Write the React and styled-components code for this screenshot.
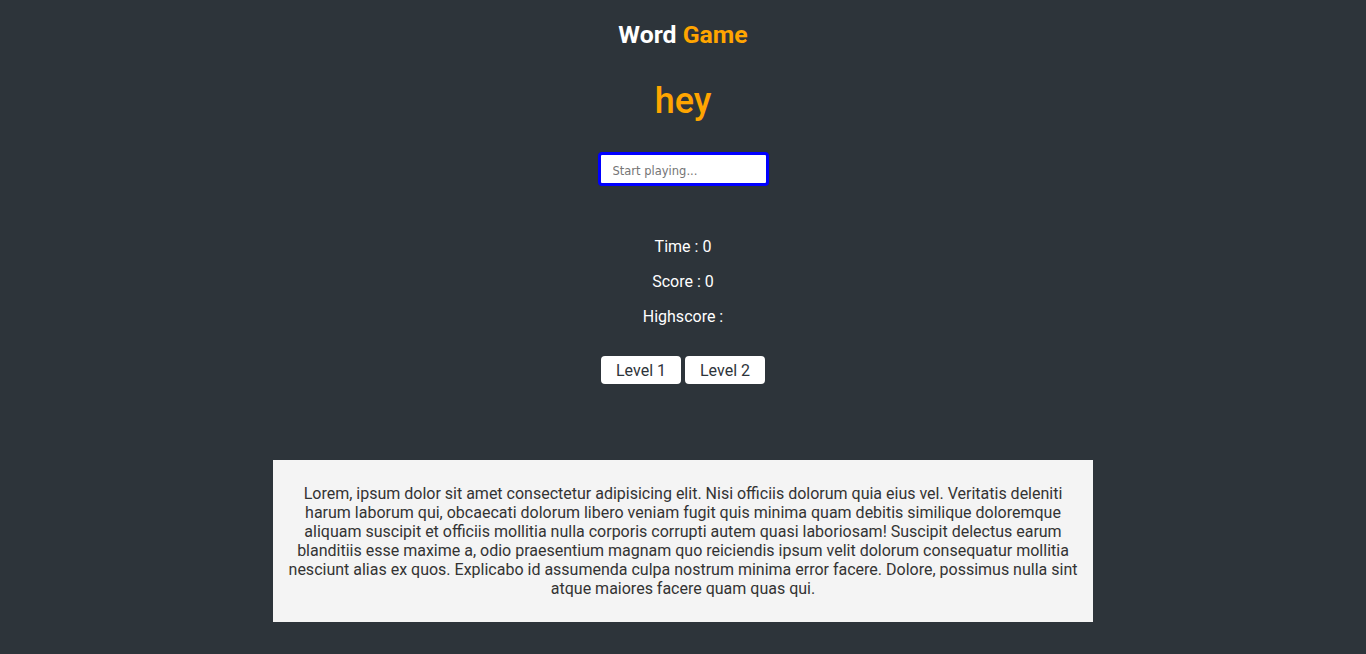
import React, { useState } from 'react'
import styled, { createGlobalStyle } from 'styled-components'

const GlobalStyle = createGlobalStyle`
  html, body {
    margin: 0;
    padding: 0;
    background: #2d343a;
    font-family: Roboto, "Liberation Sans", sans-serif;
  }
`

const Page = styled.main`
  min-height: 654px;
  display: flex;
  flex-direction: column;
  align-items: center;
  color: #fff;
`

const Title = styled.h1`
  margin: 21px 0 0;
  font-size: 24.8px;
  line-height: 28px;
  font-weight: 700;

  span {
    color: #ffa500;
  }
`

const Word = styled.h2`
  margin: 31px 0 0;
  font-size: 36px;
  line-height: 42px;
  font-weight: 500;
  color: #ffa500;
`

const Input = styled.input`
  margin-top: 30px;
  width: 171px;
  height: 34px;
  box-sizing: border-box;
  border: 3px solid #0000ff;
  border-radius: 4px;
  padding: 3px 12px 0;
  font-family: "DejaVu Sans", sans-serif;
  font-size: 11.5px;
  outline: none;

  &::placeholder {
    color: #757575;
  }
`

const Stats = styled.div`
  margin-top: 51px;
  display: flex;
  flex-direction: column;
  align-items: center;
  gap: 16px;
`

const Stat = styled.p`
  margin: 0;
  font-size: 16px;
  line-height: 19px;
`

const Levels = styled.div`
  margin-top: 30px;
  display: flex;
  gap: 4px;
`

const LevelButton = styled.button`
  width: 80px;
  height: 28px;
  border: none;
  border-radius: 4px;
  background: #fff;
  color: #2d343a;
  font-family: Roboto, "Liberation Sans", sans-serif;
  font-size: 16px;
  cursor: pointer;
`

const Info = styled.section`
  margin-top: 76px;
  width: 820px;
  box-sizing: border-box;
  padding: 24px 15px;
  background: #f4f4f4;
  color: #333;
  font-size: 16px;
  line-height: 19px;
  text-align: center;

  p {
    margin: 0;
  }
`

export default function App() {
  const [value, setValue] = useState('')
  return (
    <Page>
      <GlobalStyle />
      <Title>Word <span>Game</span></Title>
      <Word>hey</Word>
      <Input
        placeholder="Start playing..."
        value={value}
        onChange={e => setValue(e.target.value)}
      />
      <Stats>
        <Stat>Time : 0</Stat>
        <Stat>Score : 0</Stat>
        <Stat>Highscore : </Stat>
      </Stats>
      <Levels>
        <LevelButton>Level 1</LevelButton>
        <LevelButton>Level 2</LevelButton>
      </Levels>
      <Info>
        <p>
          Lorem, ipsum dolor sit amet consectetur adipisicing elit. Nisi officiis dolorum quia eius vel. Veritatis deleniti harum laborum qui, obcaecati dolorum libero veniam fugit quis minima quam debitis similique doloremque aliquam suscipit et officiis mollitia nulla corporis corrupti autem quasi laboriosam! Suscipit delectus earum blanditiis esse maxime a, odio praesentium magnam quo reiciendis ipsum velit dolorum consequatur mollitia nesciunt alias ex quos. Explicabo id assumenda culpa nostrum minima error facere. Dolore, possimus nulla sint atque maiores facere quam quas qui.
        </p>
      </Info>
    </Page>
  )
}
